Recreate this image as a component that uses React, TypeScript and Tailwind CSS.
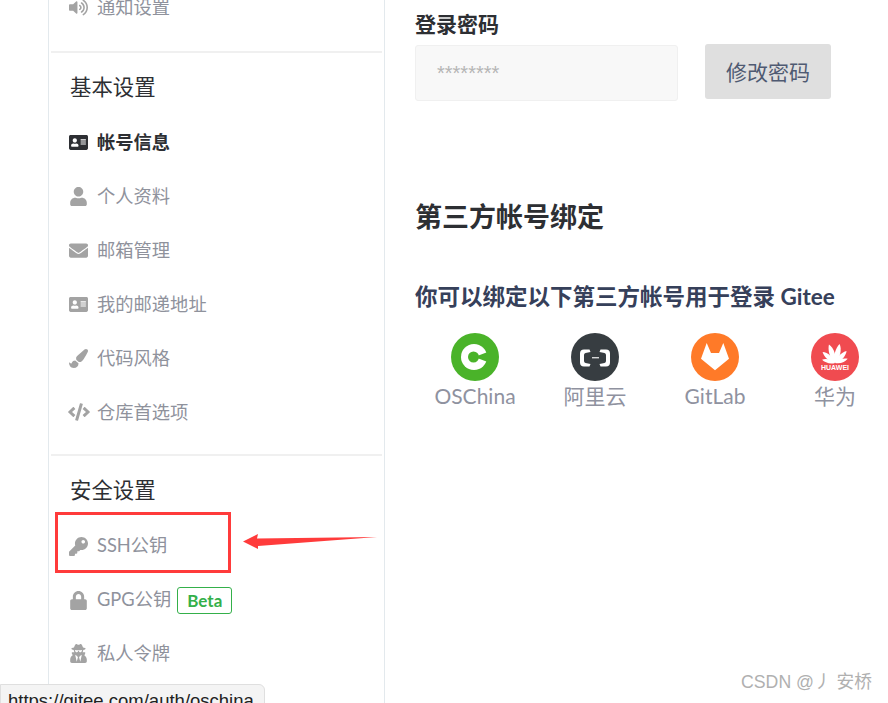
import type { ReactNode } from 'react'
import {
  FaAddressCard,
  FaCode,
  FaEnvelope,
  FaKey,
  FaLock,
  FaPaintBrush,
  FaUser,
  FaUserSecret,
  FaVolumeUp,
} from 'react-icons/fa'

function NavRow({ icon, active, children }: { icon: ReactNode; active?: boolean; children: ReactNode }) {
  return (
    <div
      className={`flex h-[53.9px] items-center pl-[20px] text-[18.3px] ${
        active ? 'font-bold text-[#2d2f33]' : 'text-[#8f929c]'
      }`}
    >
      <span className={`flex w-[28px] shrink-0 text-[19px] ${active ? 'text-[#2d2f33]' : 'text-[#a3a3a3]'}`}>{icon}</span>
      {children}
    </div>
  )
}

function SectionTitle({ children }: { children: ReactNode }) {
  return <div className="flex h-[36px] items-center pl-[21px] text-[21.4px] text-[#2d2f33]">{children}</div>
}

function OschinaLogo() {
  return (
    <svg viewBox="0 0 48 48" className="h-[48px] w-[48px]">
      <circle cx="24" cy="24" r="24" fill="#4ab329" />
      <circle cx="23" cy="24" r="13" fill="#fff" />
      <circle cx="22.500" cy="24" r="5.500" fill="#4ab329" />
      <path d="M23.500 24L38 18.500V29.500Z" fill="#4ab329" />
    </svg>
  )
}

function AliyunLogo() {
  return (
    <svg viewBox="0 0 48 48" className="h-[48px] w-[48px]">
      <circle cx="24" cy="24" r="24" fill="#373d41" />
      <path
        d="M18.500 16.500H13Q9 16.500 9 20.500V29.500Q9 33.500 13 33.500H18.500L19.500 31L14.500 30Q13 29.700 13 28V22Q13 20.300 14.500 20L19.500 19ZM29.500 16.500H35Q39 16.500 39 20.500V29.500Q39 33.500 35 33.500H29.500L28.500 31L33.500 30Q35 29.700 35 28V22Q35 20.300 33.500 20L28.500 19Z"
        fill="#fff"
      />
      <rect x="21" y="24" width="7" height="1.400" fill="#d5d7d8" />
    </svg>
  )
}

function GitlabLogo() {
  return (
    <svg viewBox="0 0 48 48" className="h-[48px] w-[48px]">
      <circle cx="24" cy="24" r="24" fill="#ff7a28" />
      <path d="M15.700 10L20 20H28L32.300 10L38 25.700L24 37.300L10 25.700Z" fill="#fff" />
    </svg>
  )
}

function HuaweiLogo() {
  const petals = [
    [-74, 0.72],
    [-46, 0.9],
    [-16, 1.05],
    [16, 1.05],
    [46, 0.9],
    [74, 0.72],
  ]
  return (
    <svg viewBox="0 0 48 48" className="h-[48px] w-[48px]">
      <circle cx="24" cy="24" r="24" fill="#f04b50" />
      {petals.map(([a, s]) => (
        <path
          key={a}
          d="M24 30C20 24 20.800 16 23.300 11.500C27 16 27.500 24 24 30Z"
          fill="#fff"
          transform={`translate(24 30) rotate(${a}) scale(${s}) translate(-24 -30)`}
        />
      ))}
      <text
        x="10"
        y="37"
        textLength="28"
        lengthAdjust="spacingAndGlyphs"
        fontSize="6.500"
        fontWeight="700"
        fill="#fff"
        fontFamily="'Liberation Sans', sans-serif"
      >
        HUAWEI
      </text>
    </svg>
  )
}

function Provider({ logo, name }: { logo: ReactNode; name: string }) {
  return (
    <div className="flex w-[120px] shrink-0 flex-col items-center text-[21px] leading-[30px] text-[#8f929f]">
      {logo}
      <span>{name}</span>
    </div>
  )
}

export default function App() {
  return (
    <div className="relative flex h-[703px] w-[888px] overflow-hidden bg-white font-['Lato','Noto_Sans_CJK_SC',sans-serif]">
      <aside className="ml-[48px] h-[760px] w-[337px] -mt-[19px] shrink-0 border-x border-[#e3e9ed]">
        <NavRow icon={<FaVolumeUp />}>通知设置</NavRow>
        <div className="mx-[2px] mt-[16px] h-[2px] bg-[#f0f0f0]" />
        <div className="mt-[16px]">
          <SectionTitle>基本设置</SectionTitle>
        </div>
        <div className="mt-[11px]">
          <NavRow active icon={<FaAddressCard />}>帐号信息</NavRow>
          <NavRow icon={<FaUser />}>个人资料</NavRow>
          <NavRow icon={<FaEnvelope />}>邮箱管理</NavRow>
          <NavRow icon={<FaAddressCard />}>我的邮递地址</NavRow>
          <NavRow icon={<FaPaintBrush />}>代码风格</NavRow>
          <NavRow icon={<FaCode className="-ml-px text-[22px]" />}>仓库首选项</NavRow>
        </div>
        <div className="mx-[2px] mt-[15px] h-[2px] bg-[#f0f0f0]" />
        <div className="mt-[16px]">
          <SectionTitle>安全设置</SectionTitle>
        </div>
        <div className="mt-[11px]">
          <NavRow icon={<FaKey />}>SSH公钥</NavRow>
          <NavRow icon={<FaLock />}>
            GPG公钥
            <span className="ml-[6px] rounded-[3px] border border-[#34b04a] px-[9px] text-[17px] leading-[25px] font-bold text-[#34b04a]">
              Beta
            </span>
          </NavRow>
          <NavRow icon={<FaUserSecret />}>私人令牌</NavRow>
        </div>
      </aside>

      <main className="ml-[30px] flex min-w-0 flex-col">
        <h3 className="mt-[8px] text-[21px] leading-[32px] font-bold text-[#2d2f33]">登录密码</h3>
        <div className="mt-[4px] flex items-start">
          <div className="mt-px flex h-[56px] w-[263px] items-center rounded-[3px] border border-[#f0f0f0] bg-[#f8f8f8] pl-[21px] font-['Liberation_Sans',sans-serif] text-[20px] leading-none text-[#b5b5b5]">
            ********
          </div>
          <button className="ml-[27px] h-[55px] w-[126px] rounded-[3px] bg-[#dfdfdf] text-[21px] text-[#4f5a72]">修改密码</button>
        </div>
        <h2 className="mt-[96px] text-[27px] leading-[40px] font-bold text-[#2d2f33]">第三方帐号绑定</h2>
        <h3 className="mt-[44px] text-[22.5px] leading-[32px] font-bold text-[#36405a]">你可以绑定以下第三方帐号用于登录 Gitee</h3>
        <div className="mt-[20px] flex w-[480px]">
          <Provider logo={<OschinaLogo />} name="OSChina" />
          <Provider logo={<AliyunLogo />} name="阿里云" />
          <Provider logo={<GitlabLogo />} name="GitLab" />
          <Provider logo={<HuaweiLogo />} name="华为" />
        </div>
      </main>

      {/* screenshot annotation */}
      <div className="absolute top-[512px] left-[55px] h-[61px] w-[176px] border-[3px] border-[#ff3b3b]" />
      <svg className="absolute top-[530px] left-[240px] h-[24px] w-[140px]" viewBox="0 0 140 24">
        <path d="M3 11.500L18 4L17 8.500L137 7L18 16V19Z" fill="#ff3b3b" />
      </svg>
      <div className="absolute right-[16px] bottom-[7px] font-['Liberation_Sans','Noto_Sans_CJK_SC',sans-serif] text-[17.700px] text-[#b0b0b0]">
        CSDN @丿 安桥
      </div>
      <div className="absolute top-[684px] left-0 h-[30px] w-[265px] overflow-hidden rounded-tr-[6px] border border-[#dfdfdf] bg-[#f4f4f4] pt-[4px] pl-[7px] font-['Liberation_Sans',sans-serif] text-[18.500px] leading-[24px] text-[#222]">
        https://gitee.com/auth/oschina
      </div>
    </div>
  )
}
